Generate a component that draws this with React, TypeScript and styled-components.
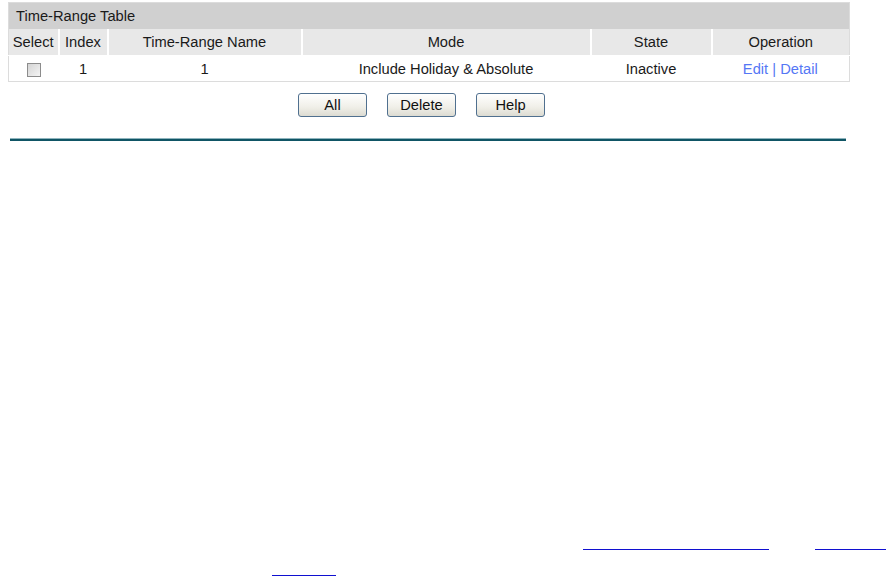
import styled, { createGlobalStyle } from "styled-components"

const GlobalStyle = createGlobalStyle`
    html, body {
        margin: 0;
        padding: 0;
        background: #fff;
        font-family: "Liberation Sans", Arial, sans-serif;
        font-size: 14.7px;
        color: #1a1a1a;
    }
`

const columns = [
    { title: "Select", width: 50 },
    { title: "Index", width: 49 },
    { title: "Time-Range Name", width: 194 },
    { title: "Mode", width: 289 },
    { title: "State", width: 121 },
    { title: "Operation", width: 138 },
]

const App = () => {
    return (
        <Page>
            <GlobalStyle />
            <Table>
                <colgroup>
                    {columns.map((c) => (
                        <col key={c.title} style={{ width: c.width }} />
                    ))}
                </colgroup>
                <thead>
                    <tr>
                        <TitleCell colSpan={6}>Time-Range Table</TitleCell>
                    </tr>
                    <tr>
                        {columns.map((c, i) => (
                            <HeadCell key={c.title} first={i === 0}>
                                {c.title}
                            </HeadCell>
                        ))}
                    </tr>
                </thead>
                <tbody>
                    <tr>
                        <Cell>
                            <Check type="checkbox" />
                        </Cell>
                        <Cell>1</Cell>
                        <Cell>1</Cell>
                        <Cell>Include Holiday &amp; Absolute</Cell>
                        <Cell>Inactive</Cell>
                        <Cell>
                            <OpLink href="#">Edit</OpLink> <Sep>|</Sep> <OpLink href="#">Detail</OpLink>
                        </Cell>
                    </tr>
                </tbody>
            </Table>
            <ButtonRow>
                <Btn>All</Btn>
                <Btn>Delete</Btn>
                <Btn>Help</Btn>
            </ButtonRow>
            <Divider />
            <Notes>
                <NoteLine indent={583}>
                    <BlankLink w={186} />
                    <BlankLink w={71} gap={46} />
                </NoteLine>
                <NoteLine indent={272}>
                    <BlankLink w={64} />
                </NoteLine>
            </Notes>
        </Page>
    )
}

const Page = styled.div`
    padding: 2px 0 0 8px;
    height: 577px;
    overflow: hidden;
    box-sizing: border-box;
`

const Table = styled.table`
    width: 841px;
    border-collapse: collapse;
    table-layout: fixed;
    border: 1px solid #dcdcdc;
`

const TitleCell = styled.th`
    background: #d0d0d0;
    height: 26px;
    padding: 0 0 0 7px;
    text-align: left;
    font-weight: normal;
    color: #1a1a1a;
`

const HeadCell = styled.th<{ first?: boolean }>`
    background: #e8e8e8;
    height: 26px;
    padding: 0;
    font-weight: normal;
    color: #1a1a1a;
    text-align: center;
    border-left: ${(p) => (p.first ? "none" : "2px solid #fff")};
    border-bottom: 1px solid #fff;
    white-space: nowrap;
`

const Cell = styled.td`
    height: 25px;
    padding: 0;
    text-align: center;
    color: #1a1a1a;
    vertical-align: middle;
    white-space: nowrap;
`

const Check = styled.input`
    appearance: none;
    width: 14px;
    height: 14px;
    margin: 2px 0 0 0;
    border: 1px solid #8c8c8c;
    background: linear-gradient(135deg, #d4d4d4, #f4f4f4);
    box-sizing: border-box;
    vertical-align: top;
`

const OpLink = styled.a`
    color: #5577f5;
    text-decoration: none;
`

const Sep = styled.span`
    color: #5577f5;
`

const ButtonRow = styled.div`
    width: 841px;
    display: flex;
    justify-content: center;
    gap: 20px;
    padding: 11px 14px 0 0;
    box-sizing: border-box;
`

const Btn = styled.button`
    width: 69px;
    height: 24px;
    border: 1px solid #50708f;
    border-radius: 3px;
    background: linear-gradient(#ffffff, #f0efe8 60%, #dcdbd2);
    font-family: "Liberation Sans", Arial, sans-serif;
    font-size: 14.7px;
    color: #111;
    padding: 0;
`

const Divider = styled.div`
    margin: 21px 0 0 2px;
    width: 836px;
    height: 2px;
    border-top: 1px solid #8fb4bd;
    background: #0f5565;
`

const Notes = styled.div`
    margin-left: -8px;
    padding-top: 399px;
`

const NoteLine = styled.div<{ indent: number }>`
    height: 26px;
    padding-left: ${(p) => p.indent}px;
    display: flex;
    white-space: nowrap;
`

const BlankLink = styled.a<{ w: number; gap?: number }>`
    display: block;
    width: ${(p) => p.w}px;
    height: 9px;
    margin-left: ${(p) => p.gap || 0}px;
    border-bottom: 1px solid #1010d0;
`

export default App
